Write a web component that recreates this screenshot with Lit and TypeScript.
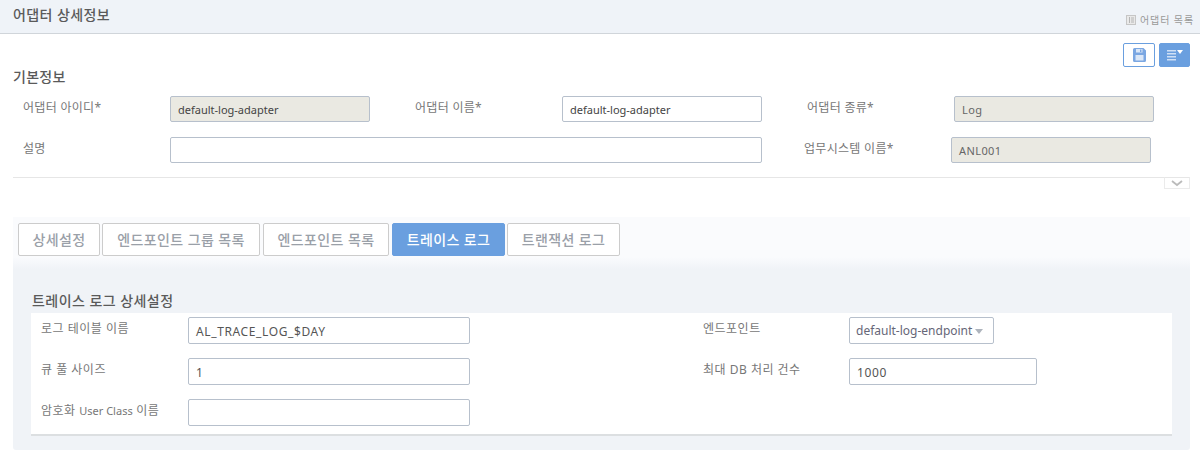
import { LitElement, html, css, svg } from "lit";
import { customElement } from "lit/decorators.js";

@customElement("app-root")
export class AppRoot extends LitElement {
  static styles = css`
    :host { display: block; width: 1200px; height: 457px; overflow: hidden; background: #fff;
      font-family: "Noto Sans", "Noto Sans CJK KR", sans-serif; font-size: 12px; color: #666; }
    * { box-sizing: border-box; }
    .head { height: 34px; background: #eff3f8; border-bottom: 1px solid #d0d5da; display: flex; justify-content: space-between; padding: 0 6px 0 13px; }
    .title { font-size: 14px; font-weight: 500; color: #5a5a5a; letter-spacing: .4px; line-height: 29px; }
    .crumb { display: flex; align-items: center; gap: 4px; margin-top: 6px; font-size: 10px; color: #999; letter-spacing: .9px; }
    .tools { display: flex; justify-content: flex-end; gap: 4px; padding: 9px 10px 0 0; height: 33px; }
    .tool { width: 32px; height: 24px; border: 1px solid #6a9fdf; border-radius: 2px; background: #fff; display: flex; align-items: center; justify-content: center; }
    .tool.fill { width: 31px; background: #6a9fdf; }
    .sect { margin-left: 13px; font-size: 14px; font-weight: 500; color: #5a5a5a; line-height: 20px; height: 19px; letter-spacing: .3px; }
    .basic { display: flex; flex-direction: column; gap: 15px; padding: 10px 0 0 23px; }
    .row { display: flex; gap: 45px; height: 26px; }
    .row.tight { gap: 42px; }
    .pair { display: flex; flex: none; }
    .l { width: 147px; flex: none; line-height: 24px; color: #777; letter-spacing: .3px; white-space: nowrap; }
    .i { width: 200px; flex: none; height: 26px; border: 1px solid #b7c0cc; border-radius: 2px; background: #fff; padding: 0 7px; line-height: 25px; font-size: 11px; color: #444; white-space: nowrap; }
    .i.ro { background: #eae9e2; }
    .i.muted { color: #666; letter-spacing: .42px; }
    .i.wide { width: 592px; }
    .foldbar { margin: 14px 10px 0 13px; height: 12px; border-top: 1px solid #e6e6e6; display: flex; justify-content: flex-end; }
    .fold { width: 26px; height: 12px; margin-top: -1px; border: 1px solid #ebebeb; border-top-color: #e6e6e6; background: #fff; display: flex; align-items: center; justify-content: center; }
    .panel { margin: 28px 10px 0 13px; height: 233px; border-radius: 0 0 3px 3px;
      background: linear-gradient(#fafbfd 0, #fafbfd 40px, #f0f3f7 52px); padding: 6px 18px 0 5px; }
    .tabs { display: flex; gap: 2px; height: 33px; }
    .tab { height: 33px; border: 1px solid #ccc; border-radius: 2px; background: #fff; line-height: 31px; text-align: center; font-size: 14px; font-weight: 500; color: #9aa0a8; letter-spacing: .4px; white-space: nowrap; }
    .tab.on { background: #6a9fdf; border-color: #6a9fdf; color: #fff; }
    .sub { margin: 35px 0 0 14px; font-size: 14px; font-weight: 500; color: #5a5a5a; line-height: 20px; height: 22px; letter-spacing: .45px; }
    .box { margin-left: 13px; height: 123px; background: #fff; border-bottom: 2px solid #dcdfe1; display: grid; grid-template-columns: 147px 282px 233px 146px 188px; grid-template-rows: 27px 27px 27px; row-gap: 14px; padding: 4px 0 0 10px; }
    .box .l { width: auto; line-height: 24px; letter-spacing: .5px; font-size: 12px; }
    .latin { font-size: 11px; letter-spacing: 0; }
    .box .i { width: auto; height: 27px; line-height: 27px; font-size: 12px; color: #555; letter-spacing: .62px; }
    .box .sel { width: 145px; display: flex; align-items: center; gap: 3px; letter-spacing: 0; padding: 0 0 0 6px; color: #667; }
    .caret { width: 0; height: 0; border: 4.5px solid transparent; border-top: 5px solid #aeb4bd; border-bottom: 0; margin-top: 1px; }
  `;

  private saveIcon() {
    return svg`<svg width="13" height="14" viewBox="0 0 13 14"><path fill="#7ba7e2" d="M0 1.5A1.5 1.5 0 0 1 1.5 0H10.5L13 2.5v10a1.5 1.5 0 0 1-1.5 1.5h-10A1.5 1.5 0 0 1 0 12.500z"/><rect x="3" y="1" width="6.500" height="3.500" fill="#dbe7f7"/><rect x="7" y="1.500" width="1.400" height="2.500" fill="#7ba7e2"/><rect x="2.500" y="7" width="8" height="5.500" fill="#dbe7f7"/></svg>`;
  }
  private listIcon() {
    return svg`<svg width="16" height="12" viewBox="0 0 16 12"><path fill="#cfe0f5" d="M0 1h9v1.500H0zM0 4h9v1.500H0zM0 7h9v1.500H0zM0 10h9v1.500H0z"/><path fill="#fff" d="M10 1h6l-3 4z"/></svg>`;
  }
  private listSmall() {
    return svg`<svg width="10" height="10" viewBox="0 0 10 10"><rect x=".5" y=".5" width="9" height="9" fill="#e9e9e9" stroke="#c6c6c6"/><path stroke="#b5b5b5" fill="none" d="M3.500 2v6M5 3h3M5 5h3M5 7h3"/></svg>`;
  }

  render() {
    const tabs: [string, number, boolean, number][] = [
      ["상세설정", 82, false, 0], ["엔드포인트 그룹 목록", 158, false, 0], ["엔드포인트 목록", 126, false, 1],
      ["트레이스 로그", 113, true, 1], ["트랜잭션 로그", 113, false, 0],
    ];
    return html`
      <div class="head">
        <div class="title">어댑터 상세정보</div>
        <div class="crumb">${this.listSmall()}<span>어댑터 목록</span></div>
      </div>
      <div class="tools">
        <div class="tool">${this.saveIcon()}</div>
        <div class="tool fill">${this.listIcon()}</div>
      </div>
      <div class="sect">기본정보</div>
      <div class="basic">
        <div class="row">
          <div class="pair"><div class="l">어댑터 아이디*</div><div class="i ro">default-log-adapter</div></div>
          <div class="pair"><div class="l">어댑터 이름*</div><div class="i">default-log-adapter</div></div>
          <div class="pair"><div class="l">어댑터 종류*</div><div class="i ro muted">Log</div></div>
        </div>
        <div class="row tight">
          <div class="pair"><div class="l">설명</div><div class="i wide"></div></div>
          <div class="pair"><div class="l">업무시스템 이름*</div><div class="i ro muted">ANL001</div></div>
        </div>
      </div>
      <div class="foldbar">
        <div class="fold"><svg width="12" height="7" viewBox="0 0 12 7"><path d="M1 1l5 4 5-4" fill="none" stroke="#bbb" stroke-width="1.8"/></svg></div>
      </div>
      <div class="panel">
        <div class="tabs">
          ${tabs.map(([t, w, on, m]) => html`<div class="tab ${on ? "on" : ""}" style="width:${w}px;margin-left:${m}px">${t}</div>`)}
        </div>
        <div class="sub">트레이스 로그 상세설정</div>
        <div class="box">
          <div class="l">로그 테이블 이름</div><div class="i">AL_TRACE_LOG_$DAY</div>
          <div></div>
          <div class="l">엔드포인트</div><div class="i sel">default-log-endpoint<span class="caret"></span></div>
          <div class="l">큐 풀 사이즈</div><div class="i">1</div>
          <div></div>
          <div class="l">최대 DB 처리 건수</div><div class="i">1000</div>
          <div class="l">암호화 <span class="latin">User Class</span> 이름</div><div class="i"></div>
        </div>
      </div>
    `;
  }
}
